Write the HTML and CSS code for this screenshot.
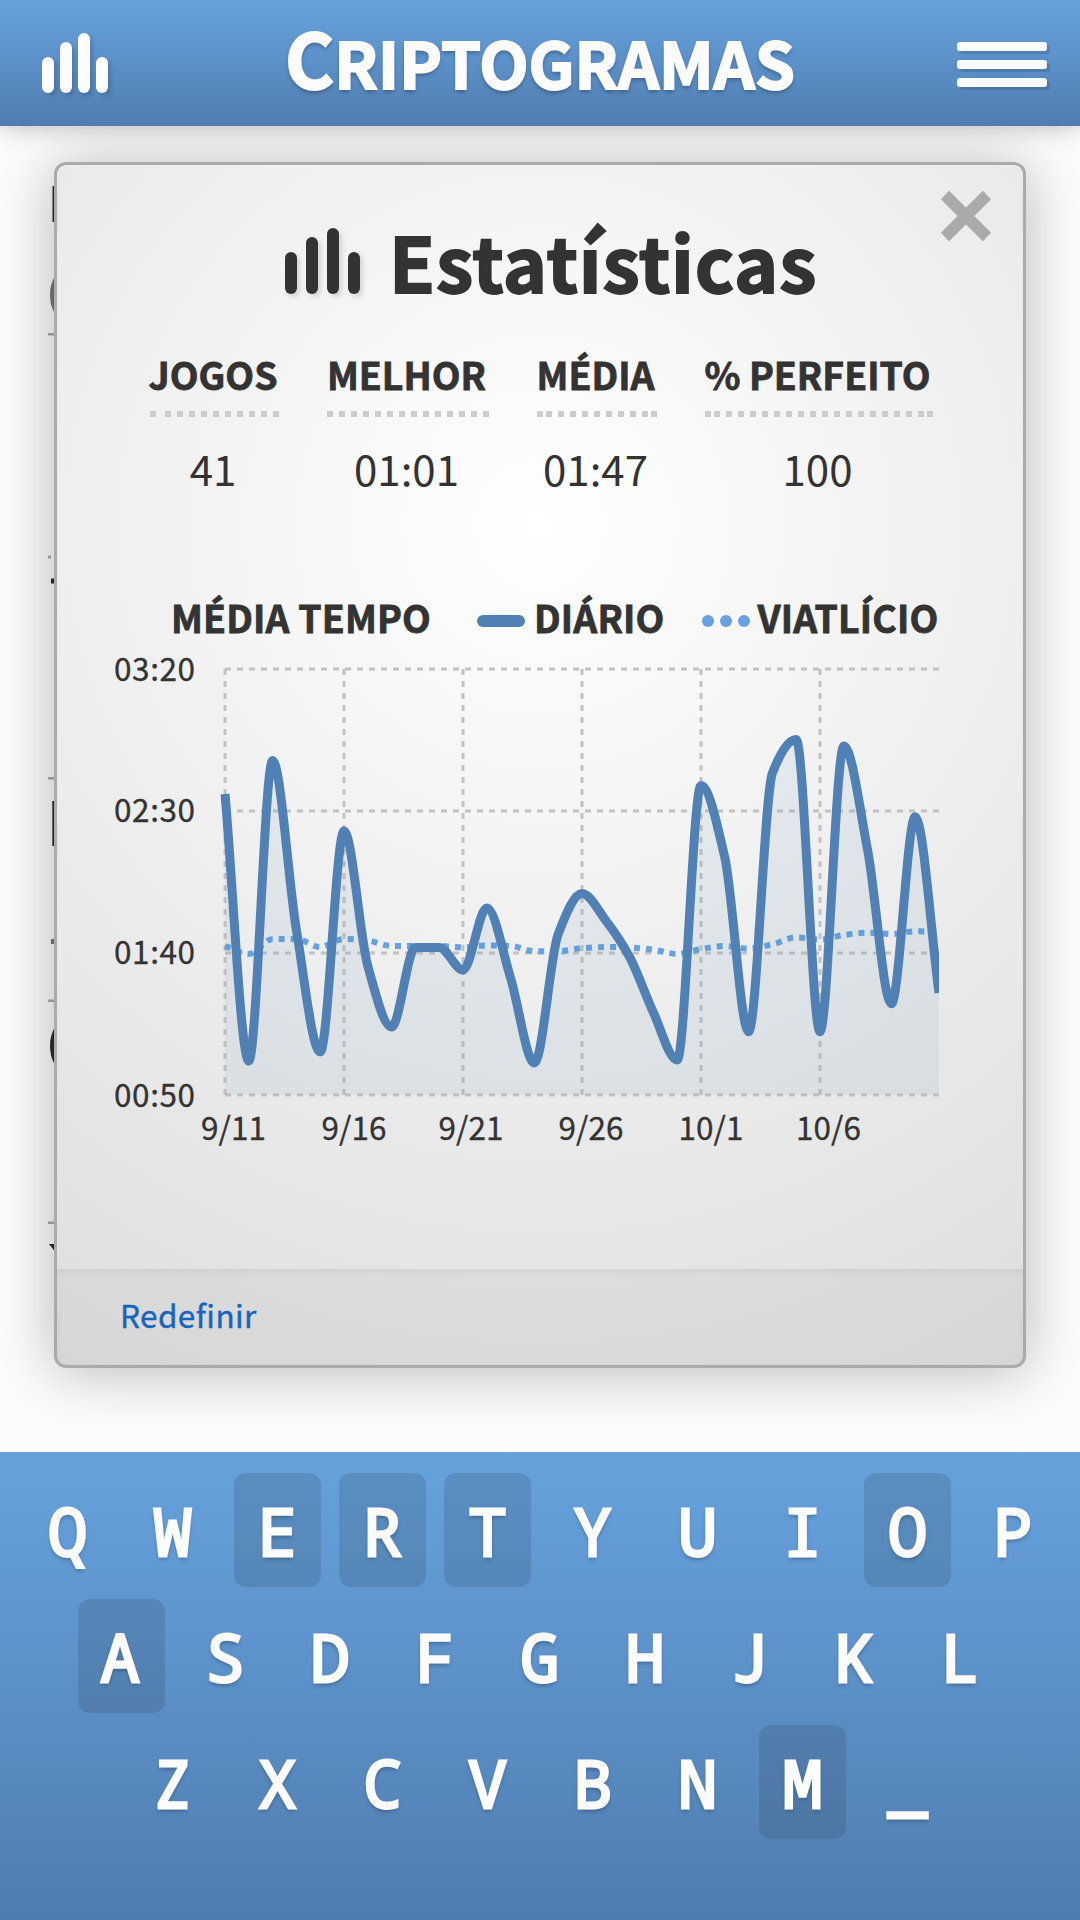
FILE: index.html
```html
<!DOCTYPE html>
<html lang="pt">
<head>
<meta charset="utf-8">
<title>Criptogramas</title>
<link rel="stylesheet" href="styles.css">
</head>
<body>
<header class="topbar">
  <svg class="topbar-stats" width="66" height="60" viewBox="0 0 66 60">
    <rect x="0" y="24" width="12" height="36" rx="6"/><rect x="18" y="9" width="12" height="51" rx="6"/><rect x="36" y="0" width="12" height="60" rx="6"/><rect x="54" y="24" width="12" height="36" rx="6"/>
  </svg>
  <h1 class="brand"><span class="brand-initial">C</span>RIPTOGRAMAS</h1>
  <div class="menu"><span></span><span></span><span></span></div>
</header>

<main class="board">
  <svg class="puzzle" width="60" height="1326" viewBox="0 126 60 1326">
    <g fill="#aaa"><path d="M48 333h12v2.500h-12zM48 555.500h3v3h-3zM48 777h12v2.500h-12zM48 999.500h12v2.500h-12zM48 1221.500h12v2.500h-12z"/></g>
    <g fill="#2b2b2b"><path d="M52.500 186h7v36h-7zM51 578.500h9v5h-9zM52.300 801h7v45h-7zM49 1244h11v14z"/><ellipse cx="66" cy="1046" rx="16" ry="26"/></g>
    <g fill="#777"><path d="M51 939h9v5h-9z"/><ellipse cx="66" cy="295" rx="16" ry="26"/></g>
  </svg>

  <section class="dialog">
    <svg class="close" width="52" height="52" viewBox="0 0 52 52"><path d="M5 5L47 47M47 5L5 47"/></svg>
    <div class="dialog-head">
      <svg class="dialog-icon" width="75" height="66" viewBox="0 0 75 66">
        <rect x="0" y="24" width="12" height="42" rx="6"/><rect x="21" y="9" width="12" height="57" rx="6"/><rect x="42" y="0" width="12" height="66" rx="6"/><rect x="63" y="24" width="12" height="42" rx="6"/>
      </svg>
      <h2 class="dialog-title">Estatísticas</h2>
    </div>

    <div class="stats">
      <div class="stat"><div class="stat-name">JOGOS</div><svg class="rule" viewBox="0 0 129 6"><path d="M0 3h6M15 3h114"/></svg><div class="stat-value">41</div></div>
      <div class="stat"><div class="stat-name">MELHOR</div><svg class="rule" viewBox="0 0 162 6"><path d="M0 3h162"/></svg><div class="stat-value">01:01</div></div>
      <div class="stat"><div class="stat-name">MÉDIA</div><svg class="rule" viewBox="0 0 120 6"><path d="M0 3h6M9 3h102M114 3h6"/></svg><div class="stat-value">01:47</div></div>
      <div class="stat"><div class="stat-name">% PERFEITO</div><svg class="rule" viewBox="0 0 228 6"><path d="M0 3h6M9 3h210M222 3h6"/></svg><div class="stat-value">100</div></div>
    </div>

    <div class="legend">
      <span class="legend-title">MÉDIA TEMPO</span>
      <span class="swatch-line"></span><span class="legend-daily">DIÁRIO</span>
      <span class="swatch-dots"><i></i><i></i><i></i></span><span class="legend-life">VIATLÍCIO</span>
    </div>

    <svg class="chart" width="966" height="527" viewBox="0 0 966 527">
      <defs><clipPath id="plot"><rect x="-10" y="-10" width="724" height="446"/></clipPath></defs>
      <g class="ticks-y">
        <text x="57" y="38.500">03:20</text><text x="57" y="180">02:30</text><text x="57" y="321.500">01:40</text><text x="57" y="464.500">00:50</text>
      </g>
      <g transform="translate(168 27)">
        <g class="grid">
          <path d="M0 0H714M0 142H714M0 284H714M0 426H714"/>
          <path d="M0 0V426M119 0V426M238 0V426M357 0V426M476 0V426M595 0V426"/>
        </g>
        <g clip-path="url(#plot)">
          <path class="life" id="life"/>
          <path class="area" id="area"/>
          <path class="daily" id="daily"/>
        </g>
      </g>
      <g class="ticks-x">
        <text x="176.500" y="498">9/11</text><text x="297" y="498">9/16</text><text x="414" y="498">9/21</text><text x="534" y="498">9/26</text><text x="654" y="498">10/1</text><text x="771.500" y="498">10/6</text>
      </g>
    </svg>

    <footer class="dialog-foot"><a class="reset">Redefinir</a></footer>
  </section>
</main>

<div class="keyboard">
  <div class="keys"><b>Q</b><b>W</b><b class="used">E</b><b class="used">R</b><b class="used">T</b><b>Y</b><b>U</b><b>I</b><b class="used">O</b><b>P</b></div>
  <div class="keys keys-mid"><b class="used">A</b><b>S</b><b>D</b><b>F</b><b>G</b><b>H</b><b>J</b><b>K</b><b>L</b></div>
  <div class="keys"><b>Z</b><b>X</b><b>C</b><b>V</b><b>B</b><b>N</b><b class="used">M</b><b>_</b></div>
</div>
<script src="chart.js"></script>
</body>
</html>
```
FILE: styles.css
```css
* { box-sizing: border-box; }

body {
  margin: 0;
  width: 1080px;
  height: 1920px;
  display: flex;
  flex-direction: column;
  overflow: hidden;
  background: #fcfcfc;
  color: #333;
  font-family: "Noto Sans CJK JP", "Noto Sans CJK SC", sans-serif;
}

h1, h2 { margin: 0; }
svg { display: block; }

.topbar, .keyboard {
  background: linear-gradient(#65a2dc, #5f95cf 35%, #507daf);
}

.topbar {
  position: relative;
  z-index: 1;
  height: 126px;
  flex: none;
  display: grid;
  grid-template-columns: 1fr auto 1fr;
  box-shadow: 0 0 24px rgba(0, 0, 0, .28);
}

.topbar-stats {
  margin: 33px 0 0 42px;
  fill: #fcfcfc;
  overflow: visible;
  filter: drop-shadow(3px 3px 2px rgba(0, 0, 0, .15));
}

.brand {
  font-size: 64px;
  line-height: 122px;
  height: 126px;
  color: #fcfcfc;
  letter-spacing: .15px;
  -webkit-text-stroke: 2px #fcfcfc;
  text-shadow: 0 3px 4px rgba(0, 0, 0, .3);
  white-space: nowrap;
}
.brand-initial { font-size: 75px; line-height: 0; }

.menu {
  justify-self: end;
  display: flex;
  flex-direction: column;
  gap: 9px;
  margin: 42px 33px 0 0;
}
.menu span {
  width: 90px;
  height: 9px;
  border-radius: 3px;
  background: #fcfcfc;
  box-shadow: 3px 3px 0 rgba(0, 0, 0, .12);
}

.board {
  flex: 1;
  position: relative;
}
.puzzle { position: absolute; left: 0; top: 0; }

.dialog {
  position: absolute;
  left: 54px;
  top: 36px;
  width: 972px;
  height: 1206px;
  display: flex;
  flex-direction: column;
  border: 3px solid #aaa;
  border-radius: 12px;
  background: radial-gradient(circle at 50% 30%, #fff, #eee 50%, #ddd);
  box-shadow: 0 3px 60px rgba(0, 0, 0, .28);
}

.close {
  position: absolute;
  right: 31px;
  top: 25px;
  stroke: #aaa;
  stroke-width: 11.7;
}

.dialog-head {
  display: flex;
  gap: 29px;
  padding: 51px 0 0 228px;
}
.dialog-icon {
  margin-top: 12px;
  fill: #333;
  overflow: visible;
  filter: drop-shadow(3px 3px 2px rgba(0, 0, 0, .12));
}
.dialog-title {
  font-size: 75px;
  line-height: 90px;
  letter-spacing: .8px;
  -webkit-text-stroke: 1.800px #333;
  white-space: nowrap;
}

.stats {
  display: grid;
  grid-template-columns: 129px 162px 120px 228px;
  gap: 48px;
  margin: 43px 0 0 93px;
  text-align: center;
  white-space: nowrap;
}
.stat-name {
  margin: 0 3px 12px 0;
  line-height: 50px;
  display: flex;
  justify-content: center;
}
.stat-name, .legend {
  font-size: 37.4px;
  font-weight: 700;
  -webkit-text-stroke: .8px #333;
}
.rule {
  width: 100%;
  height: 6px;
  stroke: #ccc;
  stroke-width: 6;
  stroke-dasharray: 6 6;
}
.stat-value {
  margin-top: 21px;
  font-size: 42px;
  line-height: 60px;
  margin-right: 3px;
}

.legend {
  display: flex;
  align-items: center;
  margin: 94px 0 0 114px;
  letter-spacing: .15px;
  line-height: 50px;
  white-space: nowrap;
}
.legend-title { width: 306px; }
.swatch-line {
  width: 48px;
  height: 12px;
  margin-top: 8px;
  border-radius: 6px;
  background: #5181b4;
}
.legend-daily { width: 177px; padding-left: 9px; }
.swatch-dots {
  width: 48px;
  display: flex;
  gap: 6px;
  margin-top: 8px;
}
.swatch-dots i {
  width: 12px;
  height: 12px;
  border-radius: 50%;
  background: #65a2df;
}
.legend-life { padding-left: 7.5px; }

.ticks-y, .ticks-x { font-size: 31.5px; fill: #333; stroke: #333; stroke-width: .3; }
.ticks-y { letter-spacing: .6px; }
.ticks-x { text-anchor: middle; }
.grid { fill: none; stroke: #c2c2c2; stroke-width: 3; stroke-dasharray: 6 6; }
.life { fill: none; stroke: #65a2df; stroke-width: 6; stroke-dasharray: 6 6; }
.area { fill: rgba(81, 140, 180, .1); }
.daily { fill: none; stroke: #5181b4; stroke-width: 9; }

.dialog-foot {
  height: 96px;
  margin-top: auto;
  padding-left: 63px;
  border-radius: 0 0 9px 9px;
  background: rgba(0, 0, 0, .03);
  box-shadow: inset 0 3px 6px rgba(0, 0, 0, .05);
  line-height: 91px;
}
.reset {
  font-size: 31.5px;
  letter-spacing: .4px;
  color: #1565c0;
  -webkit-text-stroke: .4px #1565c0;
}

.keyboard {
  height: 468px;
  flex: none;
  display: flex;
  flex-direction: column;
  align-items: center;
  gap: 12px;
  padding-top: 21px;
}
.keys { display: flex; gap: 18px; }
.keys-mid { margin-left: 3px; }
.keys b {
  width: 87px;
  height: 114px;
  border-radius: 12px;
  font: 400 66px/114px "Noto Sans Mono", "Droid Sans Mono", "DejaVu Sans Mono", monospace;
  text-align: center;
  color: #fcfcfc;
  -webkit-text-stroke: 2.800px #fcfcfc;
  text-shadow: 0 3px 4px rgba(0, 0, 0, .3);
}
.keys-mid b { padding-right: 3px; }
.keys .used { background: rgba(50, 70, 90, .2); }
```
FILE: chart.js
```js
// One sample per day, as vertical offsets inside the 714 x 426 plot.
const STEP = 23.8;
const daily = [125, 392, 91.5, 261, 383, 162, 297, 358, 278.4, 278.4, 301, 239, 309, 394, 265, 224.5,
  251.5, 288, 343.5, 391, 116.5, 188.5, 362.7, 104, 70.5, 362.7, 77, 181, 334.7, 147.8, 324];
const life = [277, 285, 270, 270, 278, 270, 271.5, 277, 277, 277, 278.4, 276.5, 277, 282.2, 282.2, 279.2,
  278, 278.5, 280.7, 285, 280, 277, 279.5, 275.3, 268.4, 270.7, 266, 263.8, 265, 262.3, 262.7];

// Monotone cubic path: flat at local extremes, harmonic-mean slope elsewhere.
function smooth(v) {
  const n = v.length;
  const d = v.slice(1).map((y, i) => y - v[i]);
  const m = v.map((_, i) => {
    if (i === 0) return d[0];
    if (i === n - 1) return d[n - 2];
    return d[i - 1] * d[i] <= 0 ? 0 : 2 * d[i - 1] * d[i] / (d[i - 1] + d[i]);
  });
  let p = `M0 ${v[0]}`;
  for (let i = 0; i < n - 1; i++) {
    const x = i * STEP;
    p += `C${x + STEP / 3} ${v[i] + m[i] / 3} ${x + STEP * 2 / 3} ${v[i + 1] - m[i + 1] / 3} ${x + STEP} ${v[i + 1]}`;
  }
  return p;
}

document.getElementById('daily').setAttribute('d', smooth(daily));
document.getElementById('life').setAttribute('d', smooth(life));
document.getElementById('area').setAttribute('d', smooth(daily) + 'V426H0Z');
```
